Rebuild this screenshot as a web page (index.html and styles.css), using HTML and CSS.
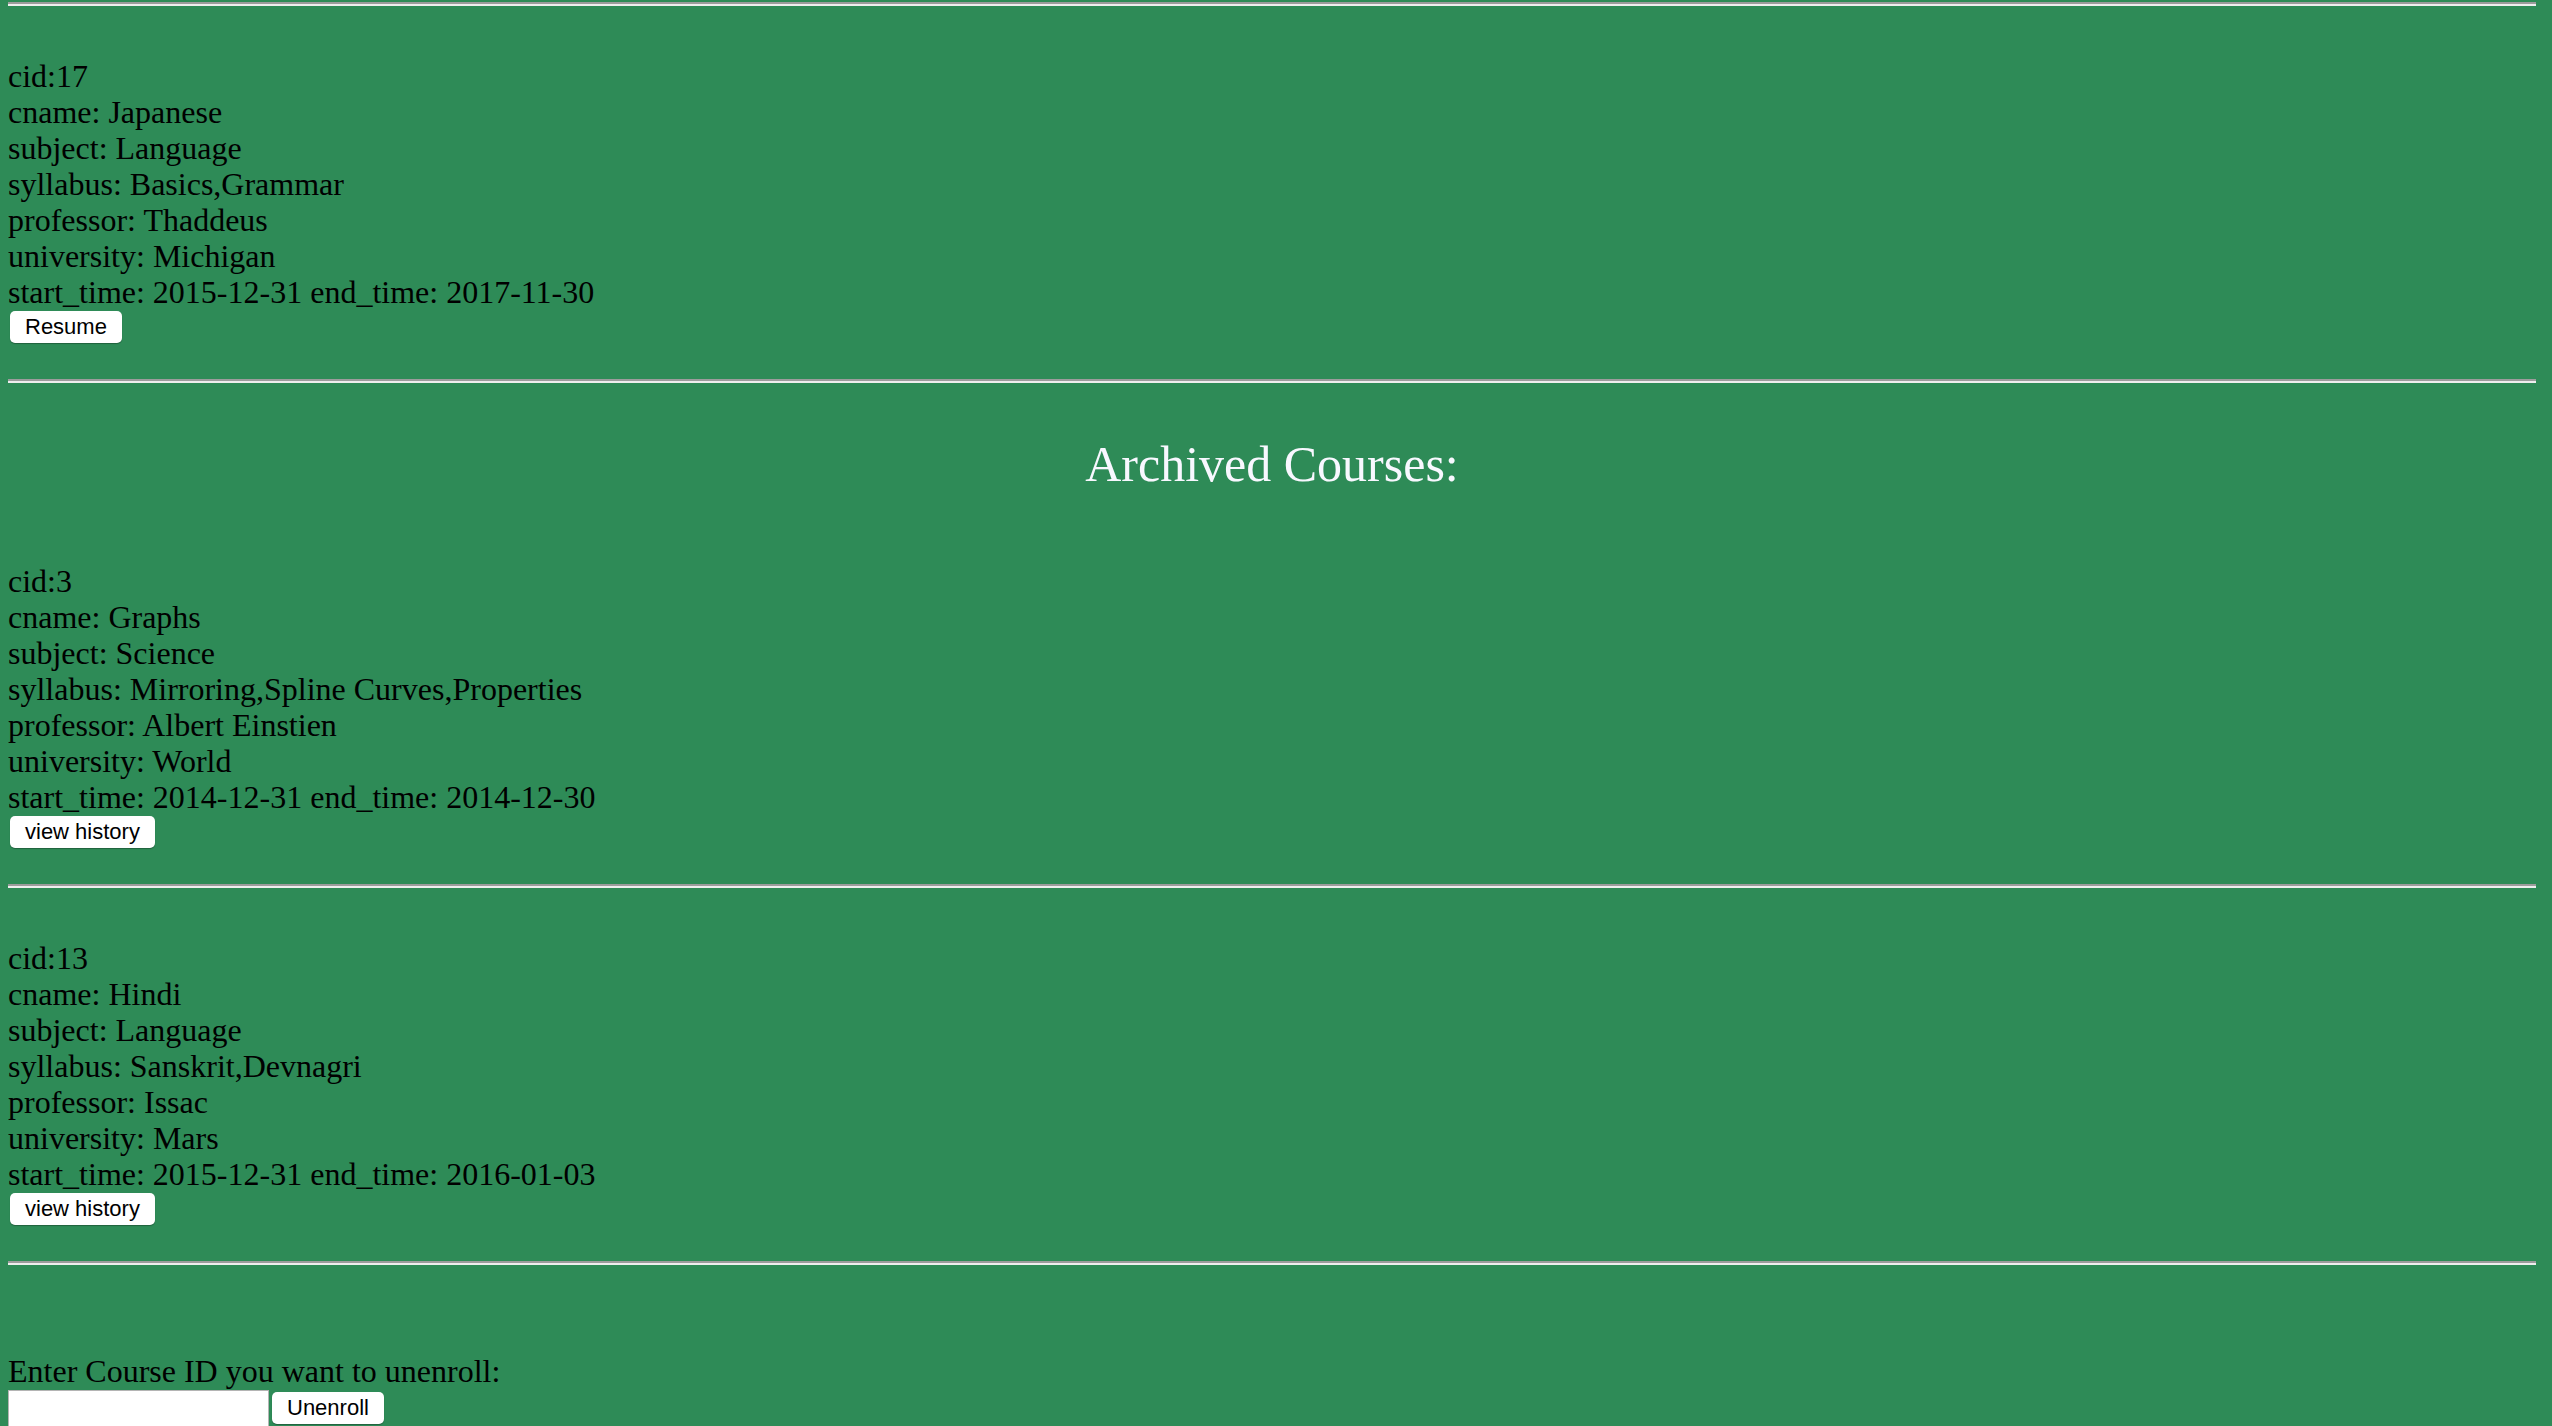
FILE: index.html
```html
<!DOCTYPE html>
<html lang="en">
<head>
<meta charset="utf-8">
<title>My Courses</title>
<link rel="stylesheet" href="styles.css">
</head>
<body>
<hr class="rule rule-top">
<div class="course">
  <div class="line">cid:17</div>
  <div class="line">cname: Japanese</div>
  <div class="line">subject: Language</div>
  <div class="line">syllabus: Basics,Grammar</div>
  <div class="line">professor: Thaddeus</div>
  <div class="line">university: Michigan</div>
  <div class="line">start_time: 2015-12-31 end_time: 2017-11-30</div>
  <form class="actions"><button type="button" class="btn">Resume</button></form>
</div>
<hr class="rule">
<h2 class="section-title">Archived Courses:</h2>
<div class="course">
  <div class="line">cid:3</div>
  <div class="line">cname: Graphs</div>
  <div class="line">subject: Science</div>
  <div class="line">syllabus: Mirroring,Spline Curves,Properties</div>
  <div class="line">professor: Albert Einstien</div>
  <div class="line">university: World</div>
  <div class="line">start_time: 2014-12-31 end_time: 2014-12-30</div>
  <form class="actions"><button type="button" class="btn">view history</button></form>
</div>
<hr class="rule">
<div class="course">
  <div class="line">cid:13</div>
  <div class="line">cname: Hindi</div>
  <div class="line">subject: Language</div>
  <div class="line">syllabus: Sanskrit,Devnagri</div>
  <div class="line">professor: Issac</div>
  <div class="line">university: Mars</div>
  <div class="line">start_time: 2015-12-31 end_time: 2016-01-03</div>
  <form class="actions"><button type="button" class="btn">view history</button></form>
</div>
<hr class="rule">
<form class="unenroll">
  <div class="line">Enter Course ID you want to unenroll:</div>
  <div class="unenroll-row">
    <input type="text" class="field">
    <button type="button" class="btn btn-row">Unenroll</button>
  </div>
</form>
</body>
</html>
```
FILE: styles.css
```css
html {
  background: #2e8b57;
}
body {
  margin: 0 16px 0 8px;
  background: #2e8b57;
  color: #000;
  font-family: "Liberation Serif", "Times New Roman", serif;
  font-size: 32px;
  line-height: 36px;
  overflow: hidden;
}
.rule {
  height: 0;
  margin: 16px 0;
  border: 0;
  border-top: 2px solid #9c9c9c;
  border-bottom: 2px solid #eeeeee;
}
.rule-top {
  margin-top: 2px;
}
.course {
  padding-top: 36px;
}
.line {
  height: 36px;
  white-space: nowrap;
}
.actions {
  height: 36px;
  margin: 0 0 32px 0;
}
.btn {
  display: block;
  margin: 1px 0 0 2px;
  height: 32px;
  padding: 0 15px;
  border: 0;
  border-radius: 5px;
  background: #ffffff;
  color: #000;
  font-family: "Liberation Sans", Arial, sans-serif;
  font-size: 22px;
  line-height: 32px;
  box-shadow: 0 1px 1px rgba(0, 0, 0, 0.3);
}
.section-title {
  margin: 52px 0 34px 0;
  text-align: center;
  font-weight: normal;
  font-size: 50px;
  line-height: 58px;
  color: #f8f8ff;
}
.unenroll {
  padding-top: 72px;
  margin: 0;
}
.unenroll-row {
  display: flex;
  align-items: flex-start;
  gap: 3px;
  height: 38px;
}
.field {
  box-sizing: border-box;
  width: 261px;
  height: 37px;
  margin: 1px 0 0 0;
  padding: 2px 4px;
  border: 1px solid #b4b4b4;
  background: #fff;
  font-size: 22px;
}
.btn-row {
  margin: 3px 0 0 0;
}
```
